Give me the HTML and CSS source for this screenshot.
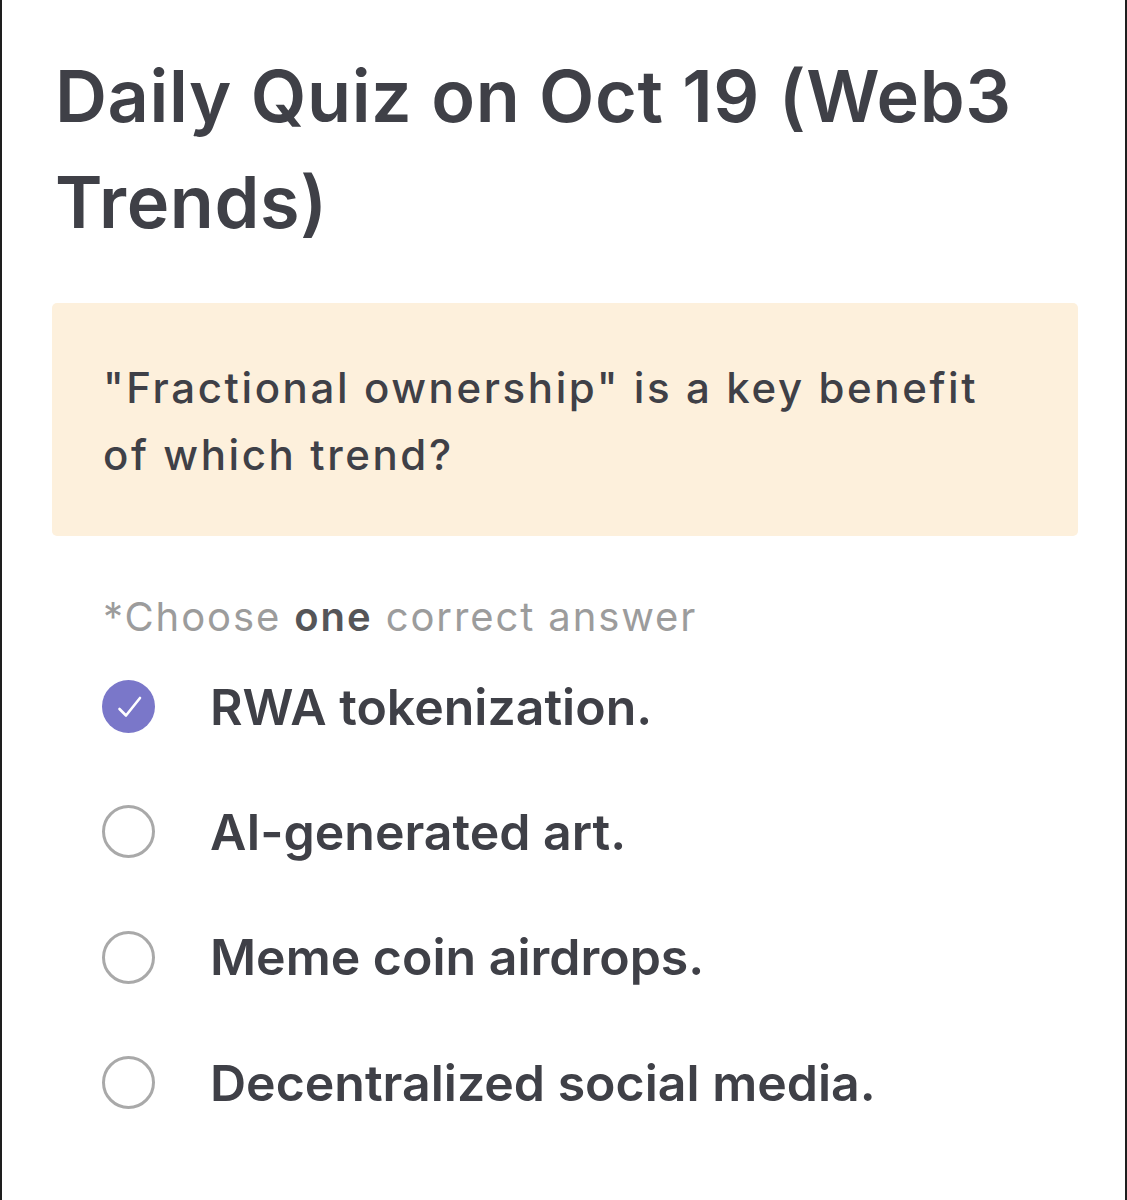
FILE: index.html
```html
<!DOCTYPE html>
<html lang="en">
<head>
<meta charset="utf-8">
<title>Daily Quiz</title>
<link rel="stylesheet" href="styles.css">
</head>
<body>
<main class="page">
  <h1 class="title">Daily Quiz on Oct 19 (Web3 Trends)</h1>
  <section class="question">
    <p class="question-text">"Fractional ownership" is a key benefit of which trend?</p>
  </section>
  <p class="hint">*Choose <strong>one</strong> correct answer</p>
  <ul class="options">
    <li class="option">
      <span class="radio checked">
        <svg viewBox="0 0 53 53" width="53" height="53" aria-hidden="true">
          <circle cx="26.5" cy="26.5" r="26.5" fill="#7a77c9"/>
          <polyline points="17.5,29 24,35.5 38,18" fill="none" stroke="#ffffff" stroke-width="2.6" stroke-linecap="round" stroke-linejoin="round"/>
        </svg>
      </span>
      <span class="label">RWA tokenization.</span>
    </li>
    <li class="option">
      <span class="radio"></span>
      <span class="label">AI-generated art.</span>
    </li>
    <li class="option">
      <span class="radio"></span>
      <span class="label">Meme coin airdrops.</span>
    </li>
    <li class="option">
      <span class="radio"></span>
      <span class="label">Decentralized social media.</span>
    </li>
  </ul>
</main>
</body>
</html>
```

FILE: styles.css
```css
html, body {
  margin: 0;
  padding: 0;
  background: #ffffff;
}

body {
  font-family: Inter, "Noto Sans", "Liberation Sans", sans-serif;
  color: #3f4047;
}

.page {
  box-sizing: border-box;
  min-height: 1200px;
  border-left: 2px solid #1e1e1e;
  border-right: 2px solid #1e1e1e;
  padding: 43px 47px 0 50px;
}

.title {
  margin: 0 0 48px 3px;
  font-size: 72px;
  line-height: 106px;
  font-weight: 600;
  letter-spacing: 0.6px;
  color: #3f4047;
  max-width: 1000px;
}

.question {
  background: #fdf0dc;
  border-radius: 5px;
  padding: 51px 70px 48px 51px;
  width: 1026px;
  box-sizing: border-box;
}

.question-text {
  margin: 0;
  font-size: 42px;
  line-height: 67px;
  font-weight: 500;
  letter-spacing: 2.6px;
  color: #3f4047;
}

.hint {
  margin: 56px 0 0 51px;
  font-size: 40px;
  line-height: 50px;
  font-weight: 400;
  letter-spacing: 1.9px;
  color: #9c9c9c;
}

.hint strong {
  font-weight: 600;
  color: #555558;
}

.options {
  list-style: none;
  margin: 2px 0 0 0;
  padding: 0 0 0 50px;
  display: flex;
  flex-direction: column;
}

.option {
  height: 125.3px;
  display: flex;
  align-items: center;
  gap: 55px;
}

.radio {
  flex: none;
  width: 53px;
  height: 53px;
  box-sizing: border-box;
  border-radius: 50%;
  border: 3px solid #a9a9a9;
  display: flex;
}

.radio.checked {
  border: none;
}

.label {
  font-size: 50px;
  font-weight: 600;
  color: #3f4047;
  line-height: 60px;
}
```
